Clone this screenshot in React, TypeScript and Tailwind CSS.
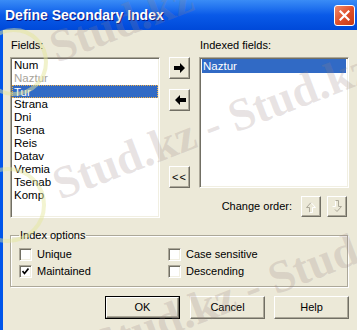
import React from "react";

const fields = ["Num", "Naztur", "Tur", "Strana", "Dni", "Tsena", "Reis", "Datav", "Vremia", "Tsenab", "Komp"];

// classic 3D push button bevel
const bevel =
  "border border-t-white border-l-white border-r-[#716f64] border-b-[#716f64] shadow-[inset_-1px_-1px_0_#aca899] bg-[#ece9d8]";

const sunken =
  "border border-t-[#aca899] border-l-[#aca899] border-r-white border-b-white shadow-[inset_1px_1px_0_#716f64,inset_-1px_-1px_0_#f1efe2] bg-white";

function ArrowRight() {
  return (
    <svg width="12" height="10" viewBox="0 0 12 10">
      <polygon points="0,3 6,3 6,0 11,5 6,10 6,7 0,7" fill="#000" />
    </svg>
  );
}

function ArrowLeft() {
  return (
    <svg width="12" height="10" viewBox="0 0 12 10">
      <polygon points="12,3 6,3 6,0 1,5 6,10 6,7 12,7" fill="#000" />
    </svg>
  );
}

function UpOutline() {
  return (
    <svg width="12" height="13" viewBox="0 0 12 13">
      <polyline points="4.5,12.5 4.5,7.5 1.5,7.5 6,2.5" fill="none" stroke="#aca899" strokeWidth="1" />
      <polyline points="6,2.5 10.5,7.5 7.5,7.5 7.5,12.5 4.5,12.5" fill="none" stroke="#fff" strokeWidth="1" />
    </svg>
  );
}

function DownOutline() {
  return (
    <svg width="12" height="13" viewBox="0 0 12 13">
      <polyline points="4.5,0.5 4.5,6.5 1.5,6.5" fill="none" stroke="#fff" strokeWidth="1" />
      <polyline points="4.5,0.5 7.5,0.5 7.5,6.5 10.5,6.5 6,11.5 4,9.5" fill="none" stroke="#aca899" strokeWidth="1" />
    </svg>
  );
}

function Check({ on }: { on?: boolean }) {
  return (
    <span className={`w-[13px] h-[13px] shrink-0 flex items-center justify-center ${sunken}`}>
      {on && (
        <svg width="7" height="7" viewBox="0 0 7 7">
          <polyline points="0.5,3 2.5,5.5 6.5,0.5" fill="none" stroke="#000" strokeWidth="1.7" />
        </svg>
      )}
    </span>
  );
}

function PushButton({ label, def }: { label: string; def?: boolean }) {
  return (
    <div className={`w-[75px] h-[23px] ${def ? "border border-black" : ""}`}>
      <div className={`w-full h-full flex items-center justify-center ${bevel}`}>{label}</div>
    </div>
  );
}

export default function App() {
  return (
    <div
      className="relative w-[357px] h-[330px] overflow-hidden flex flex-col bg-[#ece9d8] text-[11px] leading-[13px] text-black"
      style={{ fontFamily: '"Liberation Sans", Arial, sans-serif' }}
    >
      {/* TITLE BAR */}
      <div className="h-[30px] shrink-0 flex items-center justify-between pl-[5px] pr-[2px] bg-gradient-to-b from-[#3a8cf6] via-[#0a5ae8] to-[#0049d9]">
        <span className="text-white font-bold text-[14px] [text-shadow:1px_1px_0_#0a1883]">Define Secondary Index</span>
        <div className="w-[21px] h-[21px] rounded-[3px] border border-white bg-gradient-to-br from-[#f08a6a] via-[#e0502b] to-[#c63a14] flex items-center justify-center">
          <svg width="11" height="11" viewBox="0 0 11 11">
            <path d="M1.5 1.5 L9.5 9.5 M9.5 1.5 L1.5 9.5" stroke="#fff" strokeWidth="2.2" strokeLinecap="square" />
          </svg>
        </div>
      </div>

      {/* BODY */}
      <div className="flex-1 flex flex-col border-l-[3px] border-[#0055ea] pl-[7px] pt-[9px]">
        <div className="flex">
          {/* fields */}
          <div className="w-[150px] flex flex-col">
            <span className="h-[13px] pl-[1px]">Fields:</span>
            <div className={`mt-[5px] h-[161px] flex flex-col pt-[1px] pl-[2px] pr-[2px] ${sunken}`}>
              {fields.map((f, i) => (
                <div
                  key={f}
                  className={`h-[13px] leading-[12px] pl-[1px] text-[11.5px] ${
                    i === 2
                      ? "bg-[#316ac5] text-white border border-dotted border-[#f0b048] -mx-[1px] pl-[1px]"
                      : i === 1
                      ? "text-[#a7a39a]"
                      : ""
                  }`}
                >
                  {f}
                </div>
              ))}
            </div>
          </div>

          {/* move buttons */}
          <div className="ml-[9px] w-[21px] flex flex-col mt-[18px]">
            <div className={`h-[22px] flex items-center justify-center ${bevel}`}>
              <ArrowRight />
            </div>
            <div className={`mt-[10px] h-[22px] flex items-center justify-center ${bevel}`}>
              <ArrowLeft />
            </div>
            <div className={`mt-[55px] h-[22px] flex items-center justify-center ${bevel}`}>
              <span className="text-[11px] tracking-[1px]">&lt;&lt;</span>
            </div>
          </div>

          {/* indexed fields */}
          <div className="ml-[9px] w-[150px] flex flex-col">
            <span className="h-[13px] pl-[1px]">Indexed fields:</span>
            <div className={`mt-[5px] h-[131px] flex flex-col pt-[1px] px-[2px] ${sunken}`}>
              <div className="h-[14px] leading-[14px] pl-[1px] text-[11.5px] bg-[#316ac5] text-white">Naztur</div>
            </div>
            <div className="mt-[8px] h-[21px] flex items-center justify-end pr-[2px]">
              <span>Change order:</span>
              <div className={`ml-[9px] w-[20px] h-[21px] flex items-center justify-center ${bevel}`}>
                <UpOutline />
              </div>
              <div className={`ml-[6px] w-[20px] h-[21px] flex items-center justify-center ${bevel}`}>
                <DownOutline />
              </div>
            </div>
          </div>
        </div>

        {/* INDEX OPTIONS */}
        <fieldset className="mt-[11px] w-[338px] border border-[#aca899] shadow-[inset_1px_1px_0_#fff,1px_1px_0_#fff] pl-[8px] pt-[6px] pb-[8px] m-0">
          <legend className="px-[1px] h-[13px]">Index options</legend>
          <div className="grid grid-cols-[149px_1fr] gap-y-[4px]">
            <label className="flex items-center h-[13px]">
              <Check />
              <span className="ml-[5px]">Unique</span>
            </label>
            <label className="flex items-center h-[13px]">
              <Check />
              <span className="ml-[5px]">Case sensitive</span>
            </label>
            <label className="flex items-center h-[13px]">
              <Check on />
              <span className="ml-[5px]">Maintained</span>
            </label>
            <label className="flex items-center h-[13px]">
              <Check />
              <span className="ml-[5px]">Descending</span>
            </label>
          </div>
        </fieldset>

        {/* BUTTONS */}
        <div className="mt-[9px] w-[339px] flex justify-end gap-[10px]">
          <PushButton label="OK" def />
          <PushButton label="Cancel" />
          <div className="-ml-[1px]">
            <PushButton label="Help" />
          </div>
        </div>
      </div>

      {/* WATERMARK */}
      <svg className="absolute left-0 top-0 pointer-events-none" width="357" height="330">
        <circle cx="14" cy="62" r="32" fill="none" stroke="#e4e69a" strokeWidth="4" opacity="0.5" />
        <circle cx="8" cy="205" r="36" fill="none" stroke="#e4e69a" strokeWidth="4" opacity="0.45" />
        <g fontFamily='"Liberation Serif", serif' fontWeight="bold" fontSize="46" fill="rgba(150,130,130,0.22)">
          <text x="57" y="63" transform="rotate(-21 57 63)">Stud.kz - Stud.kz</text>
          <text x="60" y="200" transform="rotate(-21 60 200)">Stud.kz - Stud.kz</text>
          <text x="100" y="362" transform="rotate(-21 100 362)">Stud.kz - Stud.kz</text>
        </g>
      </svg>
    </div>
  );
}
